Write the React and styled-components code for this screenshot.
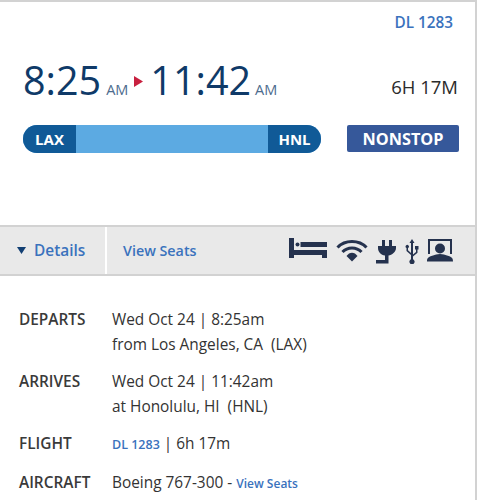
import React from "react";
import styled, { createGlobalStyle } from "styled-components";

const Global = createGlobalStyle`
  html, body { margin: 0; padding: 0; background: #fff; }
  body { font-family: "Open Sans", "Liberation Sans", sans-serif; }
`;
const Card = styled.div`
  width: 477px; height: 500px; box-sizing: border-box; overflow: hidden;
  border-top: 2px solid #d2d2d2; border-right: 2px solid #d2d2d2; background: #fff;
`;
const Summary = styled.section`
  height: 223px; box-sizing: border-box; padding: 10px 0 0 23px;
`;
const FlightNo = styled.div`
  padding-right: 22px; text-align: right; font-size: 15.3px; line-height: 20px; font-weight: 600; color: #3a72bd;
`;
const TimeRow = styled.div`
  display: flex; align-items: baseline; margin-top: 23px; height: 50px; padding-right: 17px;
`;
const Time = styled.span`
  font-size: 39.5px; line-height: 50px; color: #0f3a68;
`;
const Meridiem = styled.span`
  font-size: 14.500px; color: #4d6c8e; margin-left: ${p => p.$gap}px;
`;
const Arrow = styled.svg`
  width: 9px; height: 11px; margin: 0 7px 0 6px; align-self: center; position: relative; top: 1px;
`;
const Duration = styled.span`
  margin-left: auto; font-size: 18.5px; color: #2b2b2b; position: relative; top: -1px;
`;
const BarRow = styled.div`
  display: flex; align-items: flex-start; margin-top: 20px;
`;
const Route = styled.div`
  width: 298px; height: 28px; display: flex; justify-content: space-between; background: #5caae2; border-radius: 14px; overflow: hidden;
`;
const Airport = styled.span`
  width: 53px; box-sizing: border-box; display: flex; align-items: center; justify-content: center;
  background: #105a97; color: #fff; font-size: 15px; font-weight: 700;
`;
const Nonstop = styled.div`
  width: 112px; height: 27px; margin-left: 26px; display: flex; align-items: center; justify-content: center;
  background: #36589a; border-radius: 2px; color: #fff; font-size: 16.3px; font-weight: 700;
`;
const Toolbar = styled.nav`
  height: 47px; display: flex; align-items: stretch; background: #e9e9e9;
  border-top: 2px solid #d2d2d2; border-bottom: 2px solid #d2d2d2;
`;
const DetailsTab = styled.div`
  width: 107px; box-sizing: border-box; display: flex; align-items: center; padding-left: 17px; gap: 8px;
  border-right: 2px solid #fff; color: #3a72bd; font-size: 15.4px; font-weight: 600;
`;
const Caret = styled.svg`
  width: 9px; height: 7px;
`;
const SeatsTab = styled.div`
  display: flex; align-items: center; padding-left: 16px; color: #3a72bd; font-size: 14.3px; font-weight: 600;
`;
const Amenities = styled.div`
  margin-left: auto; padding-right: 22px; display: flex; align-items: center; gap: 8.5px;
  & svg { display: block; fill: #25324e; }
`;
const Details = styled.dl`
  margin: 0; padding: 31px 0 0 19px; display: grid; grid-template-columns: 93px 1fr; row-gap: 12px;
  font-size: 15.4px; line-height: 25px; color: #333;
`;
const Label = styled.dt`
  font-weight: 600; color: #3a3a3a; margin-top: ${p => p.$top || 0}px;
`;
const Value = styled.dd`
  margin: 0; margin-top: ${p => p.$top || 0}px;
`;
const Link = styled.a`
  color: #3a72bd; font-weight: 600; font-size: ${p => p.$size}px;
`;

export default function App() {
  return (
    <Card>
      <Global />
      <Summary>
        <FlightNo>DL 1283</FlightNo>
        <TimeRow>
          <Time>8:25</Time><Meridiem $gap={5}>AM</Meridiem>
          <Arrow viewBox="0 0 9 11"><path d="M0 0L9 5.500L0 11Z" fill="#c8203f" /></Arrow>
          <Time>11:42</Time><Meridiem $gap={4}>AM</Meridiem>
          <Duration>6H 17M</Duration>
        </TimeRow>
        <BarRow>
          <Route>
            <Airport>LAX</Airport>
            <Airport>HNL</Airport>
          </Route>
          <Nonstop>NONSTOP</Nonstop>
        </BarRow>
      </Summary>
      <Toolbar>
        <DetailsTab>
          <Caret viewBox="0 0 9 7"><path d="M0 0H9L4.500 7Z" fill="#123f73" /></Caret>
          Details
        </DetailsTab>
        <SeatsTab>View Seats</SeatsTab>
        <Amenities>
          <svg width="38" height="26" viewBox="0 0 38 26">
            <path d="M0 0h5v12h33v8h-5v-3H5v3H0Z" />
            <circle cx="8.500" cy="6.500" r="2" />
            <path d="M11.500 4H38v5H11.500Z" />
          </svg>
          <svg width="32" height="26" viewBox="0 0 32 26">
            <g fill="none" stroke="#25324e" strokeWidth="3">
              <path d="M1.500 9.500C9 1.500 23 1.500 30.500 9.500" />
              <path d="M6.500 14C11.500 8.500 20.500 8.500 25.500 14" />
            </g>
            <path d="M10.500 18C13.500 13.500 18.500 13.500 21.500 18L16 23.500Z" />
          </svg>
          <svg width="20" height="26" viewBox="0 0 20 26">
            <path d="M6 2h3v6h4V2h3v6h4v2C20 14 16 17 12.500 17.500V25.500H0V22h9V17.500C5 17 2 14 2 10V8h4Z" />
          </svg>
          <svg width="14" height="26" viewBox="0 0 14 26">
            <path d="M7 1l2.500 4H8v11.500l3-2.500v-2.500h-1V8h3.500v3.500h-1v3.300L8 18.500v2.800a2.600 2.600 0 1 1-2 0V17L1.500 13V10A1.600 1.600 0 1 1 3 10v2.300L6 15V5H4.500Z" />
          </svg>
          <svg width="26" height="26" viewBox="0 0 26 26">
            <path d="M1 1h24v15h-2V3H3v13H1Z" />
            <circle cx="13" cy="10.500" r="5" />
            <path d="M0 23.500c0-3.500 1-4.500 6-6 2-.6 4-1.500 7-1.500s5 .9 7 1.500c5 1.500 6 2.500 6 6Z" />
          </svg>
        </Amenities>
      </Toolbar>
      <Details>
        <Label>DEPARTS</Label>
        <Value>Wed Oct 24 | 8:25am<br />from Los Angeles, CA &nbsp;(LAX)</Value>
        <Label>ARRIVES</Label>
        <Value>Wed Oct 24 | 11:42am<br />at Honolulu, HI &nbsp;(HNL)</Value>
        <Label>FLIGHT</Label>
        <Value><Link $size={12.5}>DL 1283</Link> | 6h 17m</Value>
        <Label $top={1}>AIRCRAFT</Label>
        <Value $top={1}>Boeing 767-300 - <Link $size={12}>View Seats</Link></Value>
      </Details>
    </Card>
  );
}
